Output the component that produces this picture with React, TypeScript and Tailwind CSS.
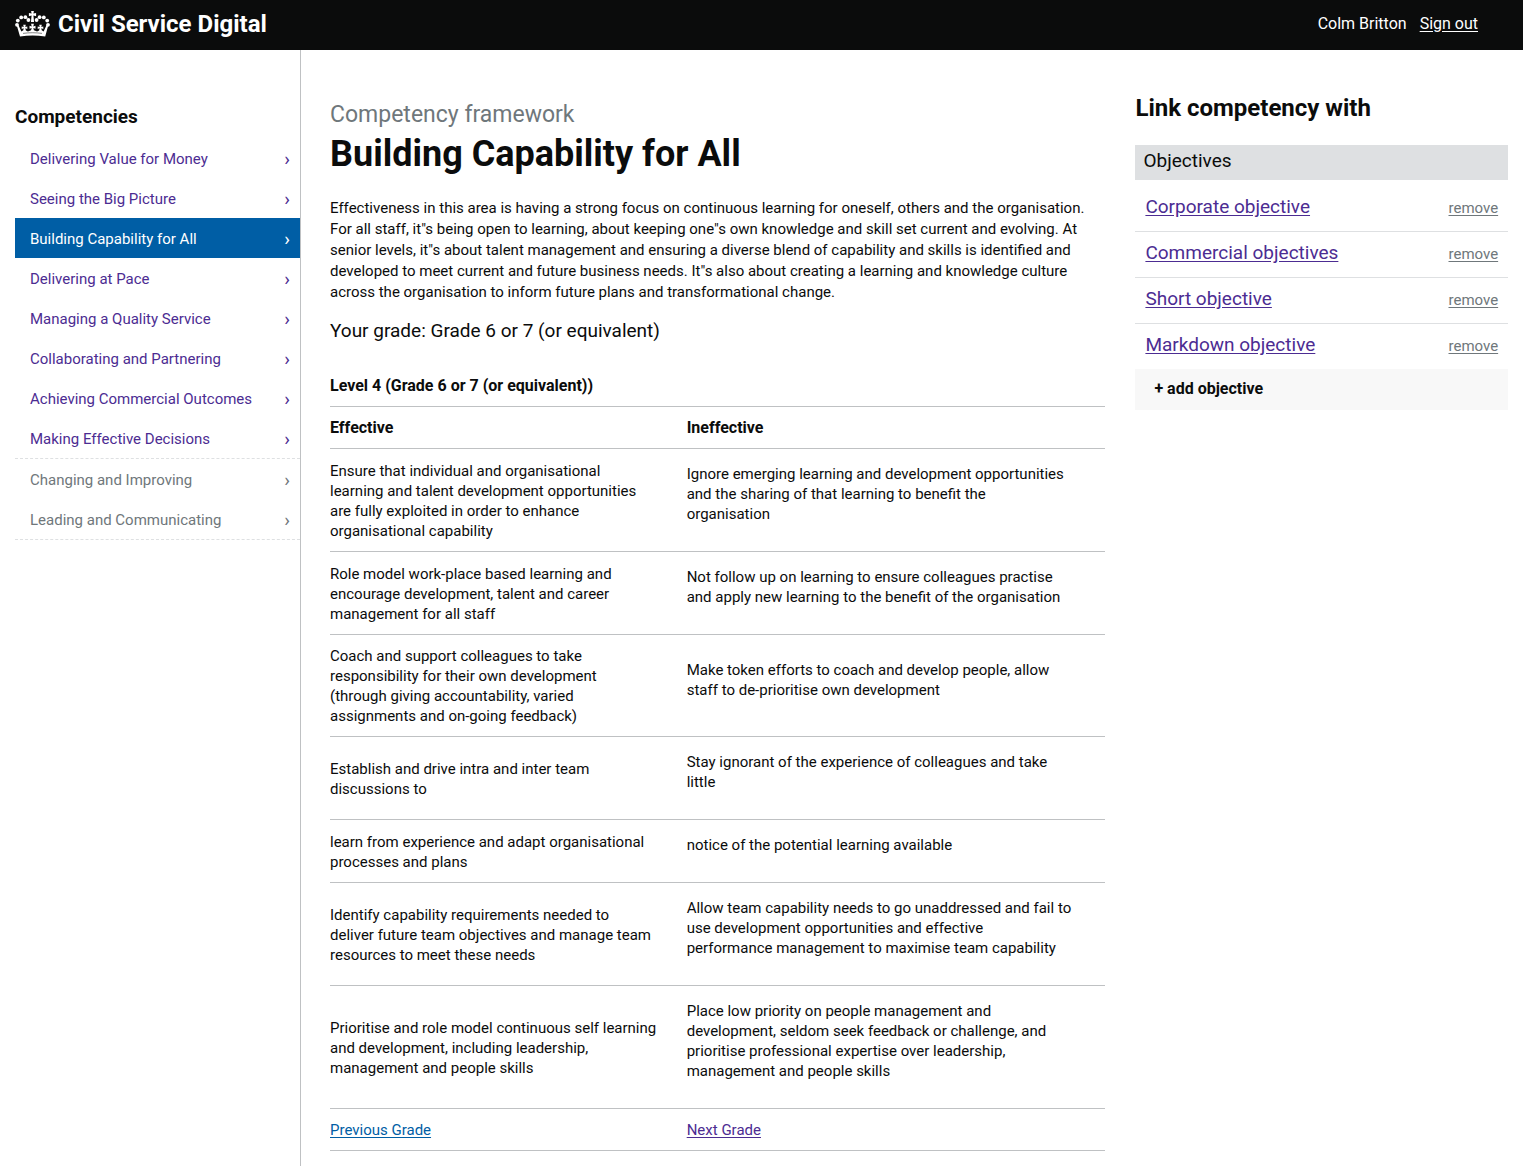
const competencies = [
  'Delivering Value for Money',
  'Seeing the Big Picture',
  'Building Capability for All',
  'Delivering at Pace',
  'Managing a Quality Service',
  'Collaborating and Partnering',
  'Achieving Commercial Outcomes',
  'Making Effective Decisions',
];

const otherCompetencies = ['Changing and Improving', 'Leading and Communicating'];

const current = 'Building Capability for All';

const description = `Effectiveness in this area is having a strong focus on continuous learning for oneself, others and the organisation.
For all staff, it"s being open to learning, about keeping one"s own knowledge and skill set current and evolving. At
senior levels, it"s about talent management and ensuring a diverse blend of capability and skills is identified and
developed to meet current and future business needs. It"s also about creating a learning and knowledge culture
across the organisation to inform future plans and transformational change.`;

const behaviours = [
  {
    effective: `Ensure that individual and organisational
learning and talent development opportunities
are fully exploited in order to enhance
organisational capability`,
    ineffective: `Ignore emerging learning and development opportunities
and the sharing of that learning to benefit the
organisation`,
  },
  {
    effective: `Role model work-place based learning and
encourage development, talent and career
management for all staff`,
    ineffective: `Not follow up on learning to ensure colleagues practise
and apply new learning to the benefit of the organisation`,
  },
  {
    effective: `Coach and support colleagues to take
responsibility for their own development
(through giving accountability, varied
assignments and on-going feedback)`,
    ineffective: `Make token efforts to coach and develop people, allow
staff to de-prioritise own development`,
  },
  {
    effective: `Establish and drive intra and inter team
discussions to`,
    ineffective: `Stay ignorant of the experience of colleagues and take
little`,
  },
  {
    effective: `learn from experience and adapt organisational
processes and plans`,
    ineffective: `notice of the potential learning available`,
  },
  {
    effective: `Identify capability requirements needed to
deliver future team objectives and manage team
resources to meet these needs`,
    ineffective: `Allow team capability needs to go unaddressed and fail to
use development opportunities and effective
performance management to maximise team capability`,
  },
  {
    effective: `Prioritise and role model continuous self learning
and development, including leadership,
management and people skills`,
    ineffective: `Place low priority on people management and
development, seldom seek feedback or challenge, and
prioritise professional expertise over leadership,
management and people skills`,
  },
];

const objectives = ['Corporate objective', 'Commercial objectives', 'Short objective', 'Markdown objective'];

function Crown() {
  const beads = [
    [2, 13.8],
    [2.8, 9.6],
    [6.2, 6.4],
    [10.4, 6.2],
    [13.4, 9],
  ];
  return (
    <svg className="h-[26px] w-[35px] shrink-0" viewBox="0 0 35 26" fill="#fff" aria-hidden="true">
      <path d="M16.1 0h2.8l-.5 2.6 2.7-.6v3.2l-2.7-.6.7 6.4h-3.2l.7-6.4-2.7.6V2l2.7.6z" />
      {beads.map(([x, y]) => (
        <g key={x}>
          <circle cx={x} cy={y} r="1.9" />
          <circle cx={35 - x} cy={y} r="1.9" />
        </g>
      ))}
      <path d="M1.8 14.6 3.4 14l3 6.6 1.9-1.4.4-2-2 .8v-2.6l2 .6-.5-2.2h2.6l-.5 2.2 2-.6V18l-2-.8.6 2.4 2 .8 3.2-1.2.6-2.2-2.2.8v-3l2.2.7-.6-2.7h2.8l-.6 2.7 2.2-.7v3l-2.2-.8.6 2.2 3.2 1.2 2-.8.6-2.4-2 .8v-2.6l2 .6-.5-2.2h2.6l-.5 2.2 2-.6V18l-2-.8.4 2 1.9 1.4 3-6.6 1.6.6-3 10.9c-8.6-1.3-16.6-1.3-25.2 0z" />
      <path d="M8 22.4c6.400-.9 12.600-.9 19 0" fill="none" stroke="#0b0c0c" strokeWidth=".5" />
    </svg>
  );
}

function NavItem({ label }: { label: string }) {
  const colour =
    label === current ? 'bg-[#005ea5] text-white' : otherCompetencies.includes(label) ? 'text-[#6f777b]' : 'text-[#4c2c92]';
  return (
    <li>
      <a
        href="#"
        aria-current={label === current ? 'page' : undefined}
        className={`flex h-10 items-center justify-between pt-[2px] pr-[10px] pl-[15px] text-[15px] ${colour}`}
      >
        <span>{label}</span>
        <span aria-hidden="true" className="text-[19px] leading-5">›</span>
      </a>
    </li>
  );
}

export default function App() {
  return (
    <div className="flex min-h-screen flex-col bg-white font-[Roboto,sans-serif] text-[#0b0c0c]">
      <header className="flex h-[50px] items-center justify-between bg-[#0b0c0c] pr-[45px] pb-[3px] pl-[15px] text-white">
        <a href="#" className="flex items-center gap-2 text-2xl font-bold">
          <Crown />
          <span>Civil Service Digital</span>
        </a>
        <div className="flex gap-[13px] text-base">
          <span>Colm Britton</span>
          <a href="#" className="underline underline-offset-2">Sign out</a>
        </div>
      </header>

      <div className="flex grow">
        <nav aria-labelledby="competencies" className="w-[301px] shrink-0 border-r border-[#bfc1c3] pt-[54px] pl-[15px]">
          <h2 id="competencies" className="pb-[9px] text-[19px] leading-[25px] font-bold">
            Competencies
          </h2>
          <ul>
            {competencies.map((c) => (
              <NavItem key={c} label={c} />
            ))}
          </ul>
          <ul className="border-y border-dashed border-[#dee0e2]">
            {otherCompetencies.map((c) => (
              <NavItem key={c} label={c} />
            ))}
          </ul>
        </nav>

        <div className="grid grow grid-cols-3 pl-[14px]">
          <main className="col-span-2 px-[15px] pt-[49px] pb-[15px]">
            <h1>
              <span className="block text-[23px] leading-8 text-[#6f777b]">Competency framework</span>
              <span className="block text-4xl leading-[46px] font-bold">Building Capability for All</span>
            </h1>
            <p className="pt-[21px] text-[15px] leading-[21px] whitespace-pre-line">{description}</p>
            <p className="pt-[15px] text-[19px] leading-[25px]">Your grade: Grade 6 or 7 (or equivalent)</p>

            <table className="mt-[22px] w-full table-fixed border-collapse text-left text-[15px] leading-5">
              <colgroup>
                <col className="w-[46%]" />
                <col />
              </colgroup>
              <thead className="text-base leading-5">
                <tr className="border-b border-[#bfc1c3]">
                  <th colSpan={2} className="pt-[11px] pb-[10px] font-bold">
                    Level 4 (Grade 6 or 7 (or equivalent))
                  </th>
                </tr>
                <tr className="border-b border-[#bfc1c3]">
                  <th className="pt-[11px] pb-[10px] font-bold">Effective</th>
                  <th className="pt-[11px] pb-[10px] font-bold">Ineffective</th>
                </tr>
              </thead>
              <tbody>
                {behaviours.map((b) => (
                  <tr key={b.effective} className="border-b border-[#bfc1c3] whitespace-pre-line">
                    <td className="pt-[11px] pb-[10px] align-middle">{b.effective}</td>
                    <td className="pt-[15px] pb-[27px] align-middle">{b.ineffective}</td>
                  </tr>
                ))}
                <tr className="border-b border-[#bfc1c3]">
                  <td className="pt-[11px] pb-[10px]">
                    <a href="#" className="text-[#005ea5] underline underline-offset-2">Previous Grade</a>
                  </td>
                  <td className="pt-[11px] pb-[10px]">
                    <a href="#" className="text-[#4c2c92] underline underline-offset-2">Next Grade</a>
                  </td>
                </tr>
              </tbody>
            </table>
          </main>

          <aside className="px-[15px] pt-[43px]">
            <h2 className="text-2xl leading-[30px] font-bold">Link competency with</h2>
            <h3 className="mt-[22px] bg-[#dee0e2] px-2 pt-[3px] pb-[7px] text-[19px] leading-[25px]">Objectives</h3>
            <ul className="divide-y divide-[#dee0e2] pt-[6px]">
              {objectives.map((o) => (
                <li key={o} className="flex items-baseline justify-between px-[10px] pt-2 pb-[10px] leading-[25px]">
                  <a href="#" className="text-[19px] text-[#4c2c92] underline underline-offset-2">{o}</a>
                  <button type="button" className="text-[15px] text-[#6f777b] underline underline-offset-2">remove</button>
                </li>
              ))}
            </ul>
            <button type="button" className="block w-full bg-[#f8f8f8] px-[19px] pt-[9px] pb-[11px] text-left text-base leading-[21px] font-bold">
              + add objective
            </button>
          </aside>
        </div>
      </div>
    </div>
  );
}
